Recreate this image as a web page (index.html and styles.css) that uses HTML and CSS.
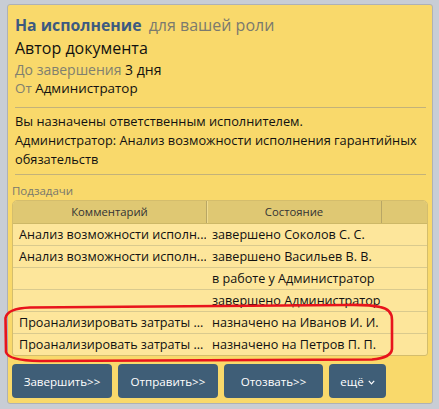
FILE: index.html
```html
<!DOCTYPE html>
<html lang="ru">
<head>
<meta charset="utf-8">
<link rel="stylesheet" href="styles.css">
</head>
<body>
<div class="card">
  <div class="head">
    <div class="title"><span class="status">На исполнение</span> <span class="role">для вашей роли</span></div>
    <div class="author">Автор документа</div>
    <div class="meta"><span class="muted">До завершения</span> 3 дня</div>
    <div class="meta"><span class="muted">От</span> Администратор</div>
  </div>
  <div class="sep"></div>
  <div class="msg">
    <p>Вы назначены ответственным исполнителем.</p>
    <p>Администратор: Анализ возможности исполнения гарантийных обязательств</p>
  </div>
  <div class="sep"></div>
  <div class="sub-label">Подзадачи</div>
  <div class="grid">
    <div class="row hdr">
      <div class="c1">Комментарий</div>
      <div class="c2">Состояние</div>
      <div class="c3"></div>
    </div>
    <div class="row"><div class="c1">Анализ возможности исполн...</div><div class="c2">завершено Соколов С. С.</div><div class="c3"></div></div>
    <div class="row"><div class="c1">Анализ возможности исполн...</div><div class="c2">завершено Васильев В. В.</div><div class="c3"></div></div>
    <div class="row"><div class="c1"></div><div class="c2">в работе у Администратор</div><div class="c3"></div></div>
    <div class="row"><div class="c1"></div><div class="c2">завершено Администратор</div><div class="c3"></div></div>
    <div class="row"><div class="c1">Проанализировать затраты ...</div><div class="c2">назначено на Иванов И. И.</div><div class="c3"></div></div>
    <div class="row last"><div class="c1">Проанализировать затраты ...</div><div class="c2">назначено на Петров П. П.</div><div class="c3"></div></div>
  </div>
  <div class="actions">
    <button class="btn w1">Завершить&gt;&gt;</button>
    <button class="btn w2">Отправить&gt;&gt;</button>
    <button class="btn w3">Отозвать&gt;&gt;</button>
    <button class="btn w4">ещё <svg class="chev" width="7" height="5" viewBox="0 0 7 5"><path d="M0.8 0.8 L3.5 3.8 L6.2 0.8" fill="none" stroke="#fff" stroke-width="1.2"/></svg></button>
  </div>
</div>
<svg class="mark" width="439" height="409" viewBox="0 0 439 409">
  <path d="M30 307.5 L345 305 Q370 304.5 380 307 Q392 309 392 320 L392 349 Q391 358 372 359.5 L40 361 Q8 360.5 6 352 L5.5 318 Q7 308.5 30 307.5 Z" fill="none" stroke="#e8141c" stroke-width="2.6" stroke-linejoin="round"/>
</svg>
</body>
</html>
```
FILE: styles.css
```css
html, body {
  margin: 0;
  padding: 0;
}
body {
  background: #c8cdd5;
  width: 439px;
  height: 409px;
  overflow: hidden;
  font-family: "Open Sans", "Noto Sans", sans-serif;
  position: relative;
}
.card {
  margin: 4px 6px 0 7px;
  height: 398px;
  background: #f9d96b;
  border: 1px solid #aeb1b6;
  border-radius: 3px;
  box-sizing: content-box;
  padding: 0 4px;
}
.head {
  padding: 8px 4px 0 3px;
}
.title {
  line-height: 24px;
  white-space: nowrap;
}
.status {
  font-size: 15.8px;
  font-weight: bold;
  color: #3d5a80;
}
.role {
  font-size: 16px;
  color: #7b7a6e;
  margin-left: 3px;
}
.author {
  font-size: 16px;
  line-height: 23px;
  color: #111;
}
.meta {
  font-size: 14px;
  line-height: 19px;
  color: #111;
}
.meta + .meta {
  font-size: 13.4px;
}
.muted {
  color: #80806f;
}
.sep {
  height: 1px;
  background: #c3b27a;
  margin: 0 2px 0 3px;
}
.head + .sep {
  margin-top: 9px;
}
.msg {
  padding: 4px 0 5px 3px;
  font-size: 12.8px;
  line-height: 19px;
  color: #111;
}
.msg p {
  margin: 0;
}
.sub-label {
  font-size: 11.5px;
  line-height: 16px;
  color: #77786d;
  padding-top: 8px;
  padding-bottom: 1px;
}
.grid {
  border: 1px solid #d4bd6c;
  border-radius: 5px 5px 3px 3px;
  overflow: hidden;
  background: #fde69b;
}
.row {
  display: grid;
  grid-template-columns: 193px 175px 1fr;
  height: 21px;
  border-bottom: 1px solid #d9ca8e;
  font-size: 12.6px;
  line-height: 21px;
  color: #111;
  white-space: nowrap;
}
.row.last {
  border-bottom: none;
}
.row > div {
  overflow: hidden;
  text-overflow: clip;
  padding-left: 6px;
}
.hdr {
  background: #dfc873;
  height: 22px;
  line-height: 22px;
  font-size: 11.3px;
  color: #333;
  border-bottom: 1px solid #cdb867;
}
.hdr > div {
  text-align: center;
  padding-left: 0;
}
.hdr .c2, .hdr .c3 {
  border-left: 1px solid #b8a665;
}
.hdr .c2 {
  box-shadow: inset 1px 0 0 #f0dc90;
}
.actions {
  display: flex;
  gap: 6px;
  padding-top: 8px;
}
.btn {
  height: 34px;
  background: #3f5e77;
  color: #fff;
  border: none;
  border-radius: 4px;
  font-family: "Open Sans", "Noto Sans", sans-serif;
  font-size: 11.6px;
  padding: 0;
  display: flex;
  align-items: center;
  justify-content: center;
  gap: 4px;
}
.w1 { width: 100px; }
.w2 { width: 100px; }
.w3 { width: 99px; }
.w4 { width: 57px; }
.chev {
  margin-top: 2px;
}
.mark {
  position: absolute;
  left: 0;
  top: 0;
  pointer-events: none;
}
```
